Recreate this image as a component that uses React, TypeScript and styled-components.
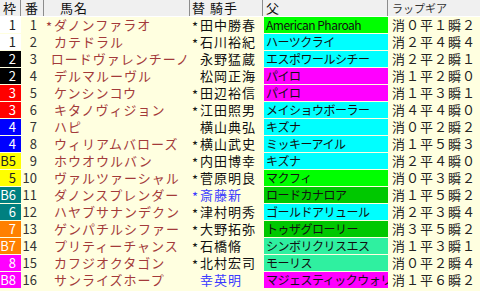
import React from "react"
import styled, { createGlobalStyle } from "styled-components"

type Entry = {
    waku: string
    num: number
    mark: boolean
    name: string
    jmark: boolean
    jockey: string
    blue?: boolean
    sire: string
    sireBg: string
    gear: string
}

const GREEN = "#00ff00"
const CYAN = "#00ffff"
const PINK = "#ff00ff"
const DGREEN = "#00c800"
const MINT = "#2ff0a0"

const entries: Entry[] = [
    { waku: "1", num: 1, mark: true, name: "ダノンファラオ", jmark: true, jockey: "田中勝春", sire: "American Pharoah", sireBg: GREEN, gear: "消０平１瞬２" },
    { waku: "1", num: 2, mark: false, name: "カテドラル", jmark: true, jockey: "石川裕紀", sire: "ハーツクライ", sireBg: CYAN, gear: "消２平４瞬４" },
    { waku: "2", num: 3, mark: false, name: "ロードヴァレンチーノ", jmark: false, jockey: "永野猛蔵", sire: "エスポワールシチー", sireBg: CYAN, gear: "消２平２瞬１" },
    { waku: "2", num: 4, mark: false, name: "デルマルーヴル", jmark: false, jockey: "松岡正海", sire: "パイロ", sireBg: PINK, gear: "消１平２瞬０" },
    { waku: "3", num: 5, mark: false, name: "ケンシンコウ", jmark: true, jockey: "田辺裕信", sire: "パイロ", sireBg: PINK, gear: "消１平３瞬１" },
    { waku: "3", num: 6, mark: false, name: "キタノヴィジョン", jmark: true, jockey: "江田照男", sire: "メイショウボーラー", sireBg: CYAN, gear: "消４平４瞬０" },
    { waku: "4", num: 7, mark: false, name: "ハピ", jmark: false, jockey: "横山典弘", sire: "キズナ", sireBg: CYAN, gear: "消０平２瞬２" },
    { waku: "4", num: 8, mark: false, name: "ウィリアムバローズ", jmark: true, jockey: "横山武史", sire: "ミッキーアイル", sireBg: CYAN, gear: "消１平５瞬３" },
    { waku: "B5", num: 9, mark: false, name: "ホウオウルバン", jmark: true, jockey: "内田博幸", sire: "キズナ", sireBg: CYAN, gear: "消２平４瞬０" },
    { waku: "5", num: 10, mark: false, name: "ヴァルツァーシャル", jmark: true, jockey: "菅原明良", sire: "マクフィ", sireBg: GREEN, gear: "消０平３瞬２" },
    { waku: "B6", num: 11, mark: false, name: "ダノンスプレンダー", jmark: true, jockey: "斎藤新", blue: true, sire: "ロードカナロア", sireBg: DGREEN, gear: "消１平５瞬２" },
    { waku: "6", num: 12, mark: false, name: "ハヤブサナンデクン", jmark: true, jockey: "津村明秀", sire: "ゴールドアリュール", sireBg: CYAN, gear: "消２平３瞬４" },
    { waku: "7", num: 13, mark: false, name: "ゲンパチルシファー", jmark: true, jockey: "大野拓弥", sire: "トゥザグローリー", sireBg: DGREEN, gear: "消３平５瞬２" },
    { waku: "B7", num: 14, mark: false, name: "プリティーチャンス", jmark: true, jockey: "石橋脩", sire: "シンボリクリスエス", sireBg: MINT, gear: "消１平３瞬１" },
    { waku: "8", num: 15, mark: false, name: "カフジオクタゴン", jmark: true, jockey: "北村宏司", sire: "モーリス", sireBg: MINT, gear: "消０平２瞬４" },
    { waku: "B8", num: 16, mark: false, name: "サンライズホープ", jmark: false, jockey: "幸英明", blue: true, sire: "マジェスティックウォリアー", sireBg: PINK, gear: "消１平６瞬２" },
]

const wakuColors: Record<string, { bg: string; fg: string }> = {
    "1": { bg: "#ffffff", fg: "#222" },
    "2": { bg: "#000000", fg: "#fff" },
    "3": { bg: "#ff0000", fg: "#fff" },
    "4": { bg: "#0000ff", fg: "#fff" },
    "5": { bg: "#ffff00", fg: "#222" },
    "6": { bg: "#008080", fg: "#fff" },
    "7": { bg: "#ff8000", fg: "#fff" },
    "8": { bg: "#ff00ff", fg: "#fff" },
}

const GlobalStyle = createGlobalStyle`
    body {
        margin: 0;
        background: #ffffe0;
        font-family: "Noto Sans CJK JP", sans-serif;
    }
`

export default function App() {
    return (
        <>
            <GlobalStyle />
            <Table>
                <HeaderRow>
                    <HeadCell $align="center">枠</HeadCell>
                    <HeadCell $align="center">番</HeadCell>
                    <HeadCell $pad={16}>馬名</HeadCell>
                    <HeadCell $pad={2}>替&nbsp;騎手</HeadCell>
                    <HeadCell $pad={3}>父</HeadCell>
                    <HeadCell $pad={4} $small>ラップギア</HeadCell>
                </HeaderRow>
                {entries.map((e) => {
                    const w = wakuColors[e.waku.replace("B", "")]
                    return (
                        <BodyRow key={e.num}>
                            <Waku $bg={w.bg} $fg={w.fg}>{e.waku}</Waku>
                            <Num>{e.num}</Num>
                            <Name>
                                <Mark>{e.mark ? "*" : ""}</Mark>
                                {e.name}
                            </Name>
                            <Jockey $blue={e.blue}>
                                <Mark>{e.jmark ? "*" : ""}</Mark>
                                {e.jockey}
                            </Jockey>
                            <Sire $bg={e.sireBg}>{e.sire}</Sire>
                            <Gear>{e.gear}</Gear>
                        </BodyRow>
                    )
                })}
            </Table>
        </>
    )
}

const Table = styled.div`
    width: 480px;
    display: flex;
    flex-direction: column;
`

const columns = "21px 23px 146px 73px 125px 92px"

const HeaderRow = styled.div`
    display: grid;
    grid-template-columns: ${columns};
    height: 17px;
    background: #f0f0f0;
    border-bottom: 1px solid #ffffff;
    box-sizing: border-box;
`

const HeadCell = styled.div<{ $align?: string; $pad?: number; $small?: boolean }>`
    display: flex;
    align-items: center;
    justify-content: ${(p) => (p.$align === "center" ? "center" : "flex-start")};
    padding-left: ${(p) => p.$pad ?? 0}px;
    border-right: 1px solid #8c8c8c;
    font-size: ${(p) => (p.$small ? "11px" : "13px")};
    letter-spacing: ${(p) => (p.$small ? "0" : "1px")};
    color: ${(p) => (p.$small ? "#333" : "#111")};
    line-height: 16px;
    white-space: nowrap;
    overflow: hidden;
    &:last-child {
        border-right: none;
    }
`

const BodyRow = styled.div`
    display: grid;
    grid-template-columns: ${columns};
    height: 17px;
    font-size: 13px;
    line-height: 16px;
    white-space: nowrap;
`

const Cell = styled.div`
    height: 16px;
    overflow: hidden;
    display: flex;
    align-items: center;
`

const Waku = styled(Cell)<{ $bg: string; $fg: string }>`
    background: ${(p) => p.$bg};
    color: ${(p) => p.$fg};
    justify-content: flex-end;
    padding-right: 5px;
    font-size: 13px;
`

const Num = styled(Cell)`
    justify-content: flex-end;
    padding-right: 7px;
    color: #333;
`

const Mark = styled.span`
    display: inline-block;
    width: 9px;
    text-align: center;
    transform: translateY(2px);
`

const Name = styled(Cell)`
    padding-left: 1px;
    color: #a33a3a;
    letter-spacing: 1px;
`

const Jockey = styled(Cell)<{ $blue?: boolean }>`
    padding-left: 1px;
    color: ${(p) => (p.$blue ? "#3b3bff" : "#111")};
    letter-spacing: 1px;
`

const Sire = styled(Cell)`
    background: ${(p: { $bg: string }) => p.$bg};
    margin-left: 1px;
    padding-left: 2px;
    color: #111;
    font-size: 12px;
    letter-spacing: -0.5px;
`

const Gear = styled(Cell)`
    padding-left: 4px;
    color: #222;
    letter-spacing: 1px;
`
